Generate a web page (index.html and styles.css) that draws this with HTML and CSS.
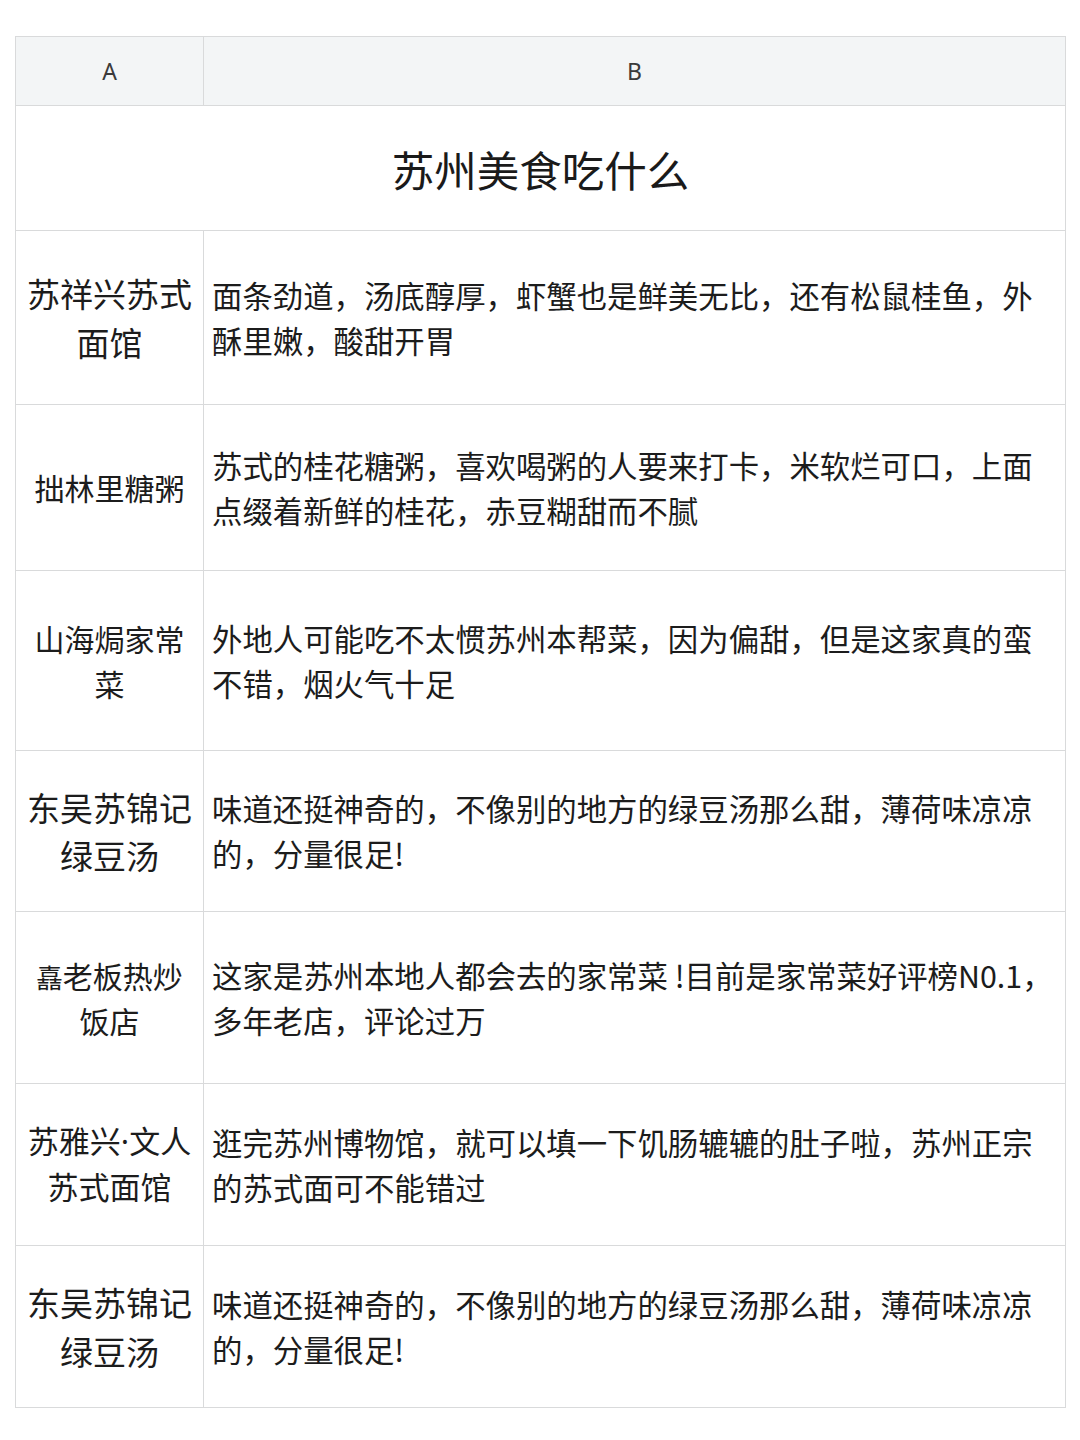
FILE: index.html
```html
<!DOCTYPE html>
<html lang="zh-CN">
<head>
<meta charset="utf-8">
<title>苏州美食吃什么</title>
<link rel="stylesheet" href="styles.css">
</head>
<body>
<div class="page">
  <table class="sheet">
    <colgroup>
      <col class="col-a">
      <col class="col-b">
    </colgroup>
    <thead>
      <tr class="head-row">
        <th>A</th>
        <th>B</th>
      </tr>
    </thead>
    <tbody>
      <tr class="title-row">
        <td colspan="2" class="title">苏州美食吃什么</td>
      </tr>
      <tr class="r1">
        <td class="name big">苏祥兴苏式面馆</td>
        <td class="desc">面条劲道，汤底醇厚，虾蟹也是鲜美无比，还有松鼠桂鱼，外酥里嫩，酸甜开胃</td>
      </tr>
      <tr class="r2">
        <td class="name">拙林里糖粥</td>
        <td class="desc">苏式的桂花糖粥，喜欢喝粥的人要来打卡，米软烂可口，上面点缀着新鲜的桂花，赤豆糊甜而不腻</td>
      </tr>
      <tr class="r3">
        <td class="name">山海焗家常菜</td>
        <td class="desc">外地人可能吃不太惯苏州本帮菜，因为偏甜，但是这家真的蛮不错，烟火气十足</td>
      </tr>
      <tr class="r4">
        <td class="name big">东吴苏锦记绿豆汤</td>
        <td class="desc">味道还挺神奇的，不像别的地方的绿豆汤那么甜，薄荷味凉凉的，分量很足!</td>
      </tr>
      <tr class="r5">
        <td class="name"><span class="rare">嚞</span>老板热炒饭店</td>
        <td class="desc">这家是苏州本地人都会去的家常菜 !目前是家常菜好评榜N0.1，多年老店，评论过万</td>
      </tr>
      <tr class="r6">
        <td class="name mid">苏雅兴·文人苏式面馆</td>
        <td class="desc">逛完苏州博物馆，就可以填一下饥肠辘辘的肚子啦，苏州正宗的苏式面可不能错过</td>
      </tr>
      <tr class="r7">
        <td class="name big">东吴苏锦记绿豆汤</td>
        <td class="desc">味道还挺神奇的，不像别的地方的绿豆汤那么甜，薄荷味凉凉的，分量很足!</td>
      </tr>
    </tbody>
  </table>
</div>
</body>
</html>
```

FILE: styles.css
```css
html, body {
  margin: 0;
  padding: 0;
  background: #ffffff;
}

body {
  font-family: "Noto Sans CJK SC", "Noto Sans", sans-serif;
  color: #1c1c1c;
}

.page {
  padding: 36px 15px 0 15px;
}

.sheet {
  width: 1050px;
  border-collapse: collapse;
  table-layout: fixed;
}

.col-a { width: 188px; }
.col-b { width: 862px; }

.sheet th,
.sheet td {
  border: 1.5px solid #d9dadb;
  padding: 0;
}

.head-row th {
  height: 68px;
  background: #f3f5f6;
  font-family: "Noto Sans", "Open Sans", sans-serif;
  font-weight: 400;
  font-size: 23px;
  color: #3a3a3a;
  text-align: center;
  vertical-align: middle;
}

.title-row td {
  height: 124px;
}

.title {
  font-size: 42.5px;
  text-align: center;
  vertical-align: middle;
  color: #1a1a1a;
}

.name {
  font-size: 30px;
  line-height: 1.5;
  text-align: center;
  vertical-align: middle;
  padding: 0 8px !important;
}

.name.big {
  font-size: 33px;
  line-height: 1.46;
}

.name.mid {
  font-family: "Noto Sans", "Noto Sans CJK SC", sans-serif;
  font-size: 31px;
  line-height: 1.46;
}

.rare {
  font-size: 0.88em;
}

.desc {
  font-size: 30.4px;
  line-height: 45px;
  vertical-align: middle;
  text-align: left;
  padding: 0 12px 0 8px !important;
}

.r1 td { height: 173px; }
.r2 td { height: 165px; }
.r3 td { height: 179px; }
.r4 td { height: 160px; }
.r5 td { height: 171px; }
.r6 td { height: 161px; }
.r7 td { height: 161px; }
```
